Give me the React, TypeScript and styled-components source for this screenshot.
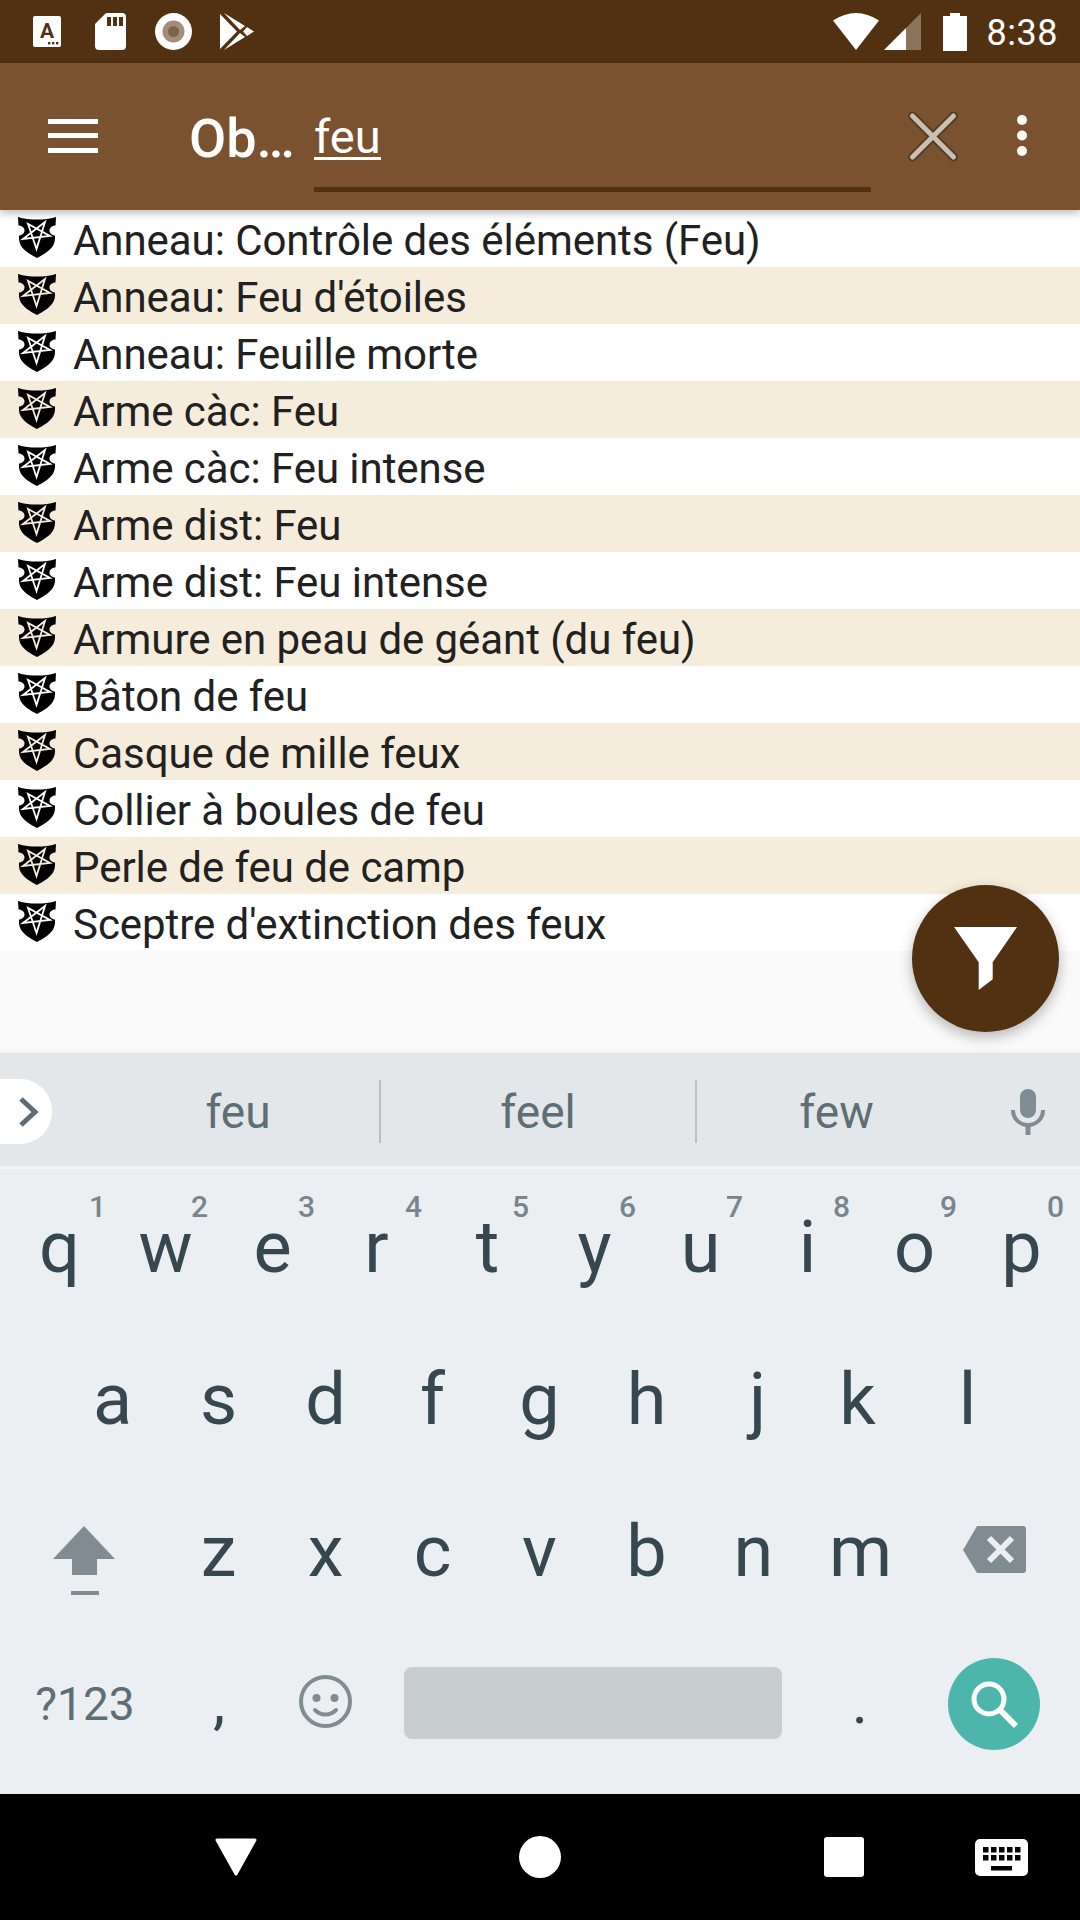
import React from 'react'
import styled, { createGlobalStyle } from 'styled-components'

const GlobalStyle = createGlobalStyle`
  html, body {
    margin: 0;
    padding: 0;
    background: #000;
  }
  * {
    box-sizing: border-box;
  }
`

const Screen = styled.div`
  position: relative;
  width: 1080px;
  height: 1920px;
  display: flex;
  flex-direction: column;
  overflow: hidden;
  font-family: Roboto, "Liberation Sans", sans-serif;
  background: #fafafa;
`

/* status bar */
const StatusBar = styled.div`
  height: 63px;
  flex: none;
  display: flex;
  align-items: flex-start;
  padding-top: 13px;
  padding-right: 22px;
  background: #523112;
  color: #fff;
`

const StatusIcon = styled.svg<{ $gap: number }>`
  flex: none;
  display: block;
  margin-left: ${(p) => p.$gap}px;
`

const Clock = styled.div`
  margin-left: 20px;
  font-size: 36px;
  line-height: 40px;
  letter-spacing: 0.5px;
  color: #fff;
`

const Spacer = styled.div`
  flex: 1;
`

/* toolbar */
const Toolbar = styled.header`
  position: relative;
  z-index: 2;
  height: 147px;
  flex: none;
  display: flex;
  align-items: flex-start;
  background: #7a5230;
  box-shadow: 0 3px 8px rgba(0, 0, 0, 0.28);
`

const ToolIcon = styled.svg<{ $left: number; $top: number }>`
  flex: none;
  display: block;
  margin-left: ${(p) => p.$left}px;
  margin-top: ${(p) => p.$top}px;
`

const Title = styled.div`
  width: 125px;
  margin-left: 91px;
  margin-top: 46px;
  font-size: 54px;
  line-height: 60px;
  font-weight: 500;
  color: #fff;
  white-space: nowrap;
`

const SearchField = styled.div`
  width: 557px;
  flex: none;
  display: flex;
  flex-direction: column;
  align-items: flex-start;
  padding-top: 54px;
`

const Typed = styled.span`
  font-size: 47px;
  line-height: 40px;
  height: 43px;
  color: #fff;
  border-bottom: 3px solid #fff;
`

const FieldLine = styled.div`
  width: 100%;
  height: 5px;
  margin-top: 27px;
  background: #523112;
`

/* result list */
const List = styled.ul`
  margin: 0;
  padding: 0;
  list-style: none;
  height: 741px;
  flex: none;
`

const Row = styled.li<{ $alt: boolean }>`
  height: 57px;
  display: flex;
  align-items: flex-start;
  background: ${(p) => (p.$alt ? '#f6ecdc' : '#fff')};
  color: ${(p) => (p.$alt ? '#f6ecdc' : '#fff')};
`

const RowLabel = styled.span`
  margin-left: 17px;
  padding-top: 2px;
  font-size: 42px;
  line-height: 57px;
  letter-spacing: -0.06px;
  color: #212121;
  white-space: nowrap;
`

const ShieldSvg = styled.svg`
  flex: none;
  display: block;
  margin-left: 18px;
  margin-top: 7px;
`

const Gap = styled.div`
  flex: 1;
  background: #fafafa;
  box-shadow: inset 0 -6px 6px -6px rgba(0, 0, 0, 0.08);
`

const Fab = styled.button`
  position: absolute;
  left: 912px;
  top: 885px;
  width: 147px;
  height: 147px;
  padding: 0;
  border: 0;
  border-radius: 50%;
  background: #523112;
  box-shadow: 0 5px 14px rgba(0, 0, 0, 0.28);
  display: flex;
  align-items: center;
  justify-content: center;
`

/* suggestions */
const SuggestionBar = styled.div`
  height: 116px;
  flex: none;
  display: flex;
  align-items: center;
  padding-top: 4px;
  background: #e3e7ea;
  border-bottom: 3px solid #f1f3f5;
`

const ExpandPill = styled.div`
  width: 52px;
  height: 65px;
  margin-right: 40px;
  flex: none;
  display: flex;
  align-items: center;
  justify-content: flex-end;
  padding-right: 13px;
  background: #fff;
  border-radius: 0 32px 32px 0;
`

const Suggestion = styled.div<{ $width: number; $indent?: number }>`
  width: ${(p) => p.$width}px;
  flex: none;
  padding-top: 1px;
  padding-left: ${(p) => p.$indent ?? 0}px;
  text-align: center;
  font-size: 46px;
  line-height: 56px;
  color: #5f6e75;
`

const SuggestionDivider = styled.div`
  width: 2px;
  height: 63px;
  flex: none;
  background: #b9bfc3;
`

const MicSlot = styled.div`
  flex: 1;
  display: flex;
  justify-content: center;
`

/* keyboard */
const Keyboard = styled.div`
  height: 625px;
  flex: none;
  padding-top: 3px;
  background: #ebeff2;
`

const KeyRow = styled.div<{ $inset: number }>`
  height: 152px;
  display: flex;
  align-items: center;
  padding-left: ${(p) => p.$inset}px;
`

const Key = styled.div<{ $shift?: number }>`
  position: relative;
  width: 107px;
  height: 152px;
  flex: none;
  text-align: center;
  text-indent: ${(p) => (p.$shift ?? 0) * 2}px;
  font-size: 72px;
  line-height: 152px;
  color: #37474f;
`

const Hint = styled.span<{ $shift?: number }>`
  position: absolute;
  left: ${(p) => 79 + (p.$shift ?? 0)}px;
  top: 17px;
  text-indent: 0;
  font-size: 30px;
  line-height: 36px;
  font-weight: 500;
  color: #78858c;
`

const IconKey = styled.div<{ $width: number; $pl?: number; $pt?: number; $pb?: number }>`
  width: ${(p) => p.$width}px;
  flex: none;
  display: flex;
  align-items: center;
  justify-content: center;
  padding: ${(p) => p.$pt ?? 0}px 0 ${(p) => p.$pb ?? 0}px ${(p) => p.$pl ?? 0}px;
`

const ModeKey = styled.div`
  width: 170px;
  margin-right: -2px;
  flex: none;
  text-align: center;
  font-size: 46px;
  line-height: 146px;
  color: #5f6e75;
`

const PunctKey = styled.div<{ $width: number }>`
  width: ${(p) => p.$width}px;
  height: 152px;
  flex: none;
  text-align: center;
  font-size: 62px;
  line-height: 148px;
  color: #37474f;
`

const SpaceBar = styled.div`
  width: 378px;
  height: 72px;
  margin-left: 23px;
  margin-bottom: 2px;
  flex: none;
  border-radius: 8px;
  background: #c8cdd0;
`

const SearchKey = styled.div`
  width: 92px;
  height: 92px;
  margin-left: 10px;
  flex: none;
  display: flex;
  align-items: center;
  justify-content: center;
  border-radius: 50%;
  background: #4db6ac;
`

/* navigation bar */
const NavBar = styled.nav`
  height: 126px;
  flex: none;
  display: flex;
  align-items: flex-start;
  background: #000;
`

const NavIcon = styled.svg<{ $left: number; $top: number }>`
  flex: none;
  display: block;
  margin-left: ${(p) => p.$left}px;
  margin-top: ${(p) => p.$top}px;
`

const results = [
  'Anneau: Contrôle des éléments (Feu)',
  "Anneau: Feu d'étoiles",
  'Anneau: Feuille morte',
  'Arme càc: Feu',
  'Arme càc: Feu intense',
  'Arme dist: Feu',
  'Arme dist: Feu intense',
  'Armure en peau de géant (du feu)',
  'Bâton de feu',
  'Casque de mille feux',
  'Collier à boules de feu',
  'Perle de feu de camp',
  "Sceptre d'extinction des feux",
]

const topRow = [
  ['q', '1'],
  ['w', '2'],
  ['e', '3'],
  ['r', '4'],
  ['t', '5'],
  ['y', '6'],
  ['u', '7'],
  ['i', '8'],
  ['o', '9'],
  ['p', '0'],
]

// a few glyphs sit off the key centre on this keyboard
const letterShift: Record<string, number> = { q: 1, t: 1, y: 1, r: -3, j: 4, k: -3, a: 1 }

const Shield = () => (
  <ShieldSvg width="38" height="41" viewBox="0 0 38 41">
    <path
      fill="#000"
      d="M0 0C6 2 12 2.5 19 2.5S32 2 38 0L37.5 8.5C35 8.5 31.5 10 31.5 13.5S35 18.5 37 18.5C37.5 28 34 33 19 41C4 33 .5 28 1 18.5C3 18.5 6.500 17 6.500 13.5S3 8.500.5 8.500Z"
    />
    <path
      fill="none"
      stroke="currentColor"
      strokeWidth="1.8"
      strokeLinejoin="miter"
      d="M18.500 32L10 7L32 19L5 22L27 5Z"
    />
  </ShieldSvg>
)

const App = () => {
  return (
    <Screen>
      <GlobalStyle />
      <StatusBar>
        <StatusIcon $gap={33} width="28" height="37" viewBox="0 0 28 37">
          <rect x="0" y="3" width="28" height="31" rx="2" fill="#fff" />
          <text x="14" y="25" textAnchor="middle" fontFamily="Roboto" fontWeight="700" fontSize="21" fill="#523112">A</text>
          <rect x="15" y="29" width="2.4" height="2.4" fill="#523112" />
          <rect x="19" y="29" width="2.4" height="2.4" fill="#523112" />
          <rect x="23" y="29" width="2.4" height="2.4" fill="#523112" />
        </StatusIcon>
        <StatusIcon $gap={34} width="31" height="37" viewBox="0 0 31 37">
          <path fill="#fff" d="M11 0H27a4 4 0 0 1 4 4V33a4 4 0 0 1-4 4H4a4 4 0 0 1-4-4V11Z" />
          <path fill="#523112" d="M12 4h4v9h-4zM18 4h4v9h-4zM24 4h4v9h-4z" />
        </StatusIcon>
        <StatusIcon $gap={29} width="37" height="37" viewBox="0 0 37 37">
          <circle cx="18.5" cy="18.5" r="18.5" fill="#fff" />
          <circle cx="18.5" cy="18.5" r="11" fill="#a38e7a" />
          <circle cx="18.5" cy="18.5" r="5.5" fill="#7f6348" />
        </StatusIcon>
        <StatusIcon $gap={28} width="34" height="37" viewBox="0 0 34 37">
          <path fill="#fff" d="M0 1L17 18.5L0 36ZM4 0L25 13L20 17ZM4 37L25 24L20 20ZM27 14L34 18.5L27 23L23 18.5Z" />
        </StatusIcon>
        <Spacer />
        <StatusIcon $gap={0} width="46" height="37" viewBox="0 0 46 37">
          <path fill="#fff" d="M0 7.5Q23 -7.5 46 7.5L23 37Z" />
        </StatusIcon>
        <StatusIcon $gap={5} width="37" height="37" viewBox="0 0 37 37">
          <path fill="#8b735c" d="M22 15L37 0V37H22Z" />
          <path fill="#fff" d="M0 37L22 15V37Z" />
        </StatusIcon>
        <StatusIcon $gap={22} width="24" height="38" viewBox="0 0 24 38">
          <path fill="#fff" d="M7 0H17V3H24V38H0V3H7Z" />
        </StatusIcon>
        <Clock>8:38</Clock>
      </StatusBar>

      <Toolbar>
        <ToolIcon $left={48} $top={56} width="50" height="34" viewBox="0 0 50 34">
          <path fill="#fff" d="M0 0h50v5H0zM0 14h50v5H0zM0 29h50v5H0z" />
        </ToolIcon>
        <Title>Ob…</Title>
        <SearchField>
          <Typed>feu</Typed>
          <FieldLine />
        </SearchField>
        <ToolIcon $left={37} $top={48} width="50" height="51" viewBox="0 0 50 51">
          <path stroke="#4f3a26" strokeWidth="8.5" strokeLinecap="round" d="M4.500 5L45.500 46M45.500 5L4.500 46" />
          <path stroke="#cbbfb2" strokeWidth="5" strokeLinecap="round" d="M4.500 5L45.500 46M45.500 5L4.500 46" />
        </ToolIcon>
        <ToolIcon $left={59} $top={52} width="10" height="41" viewBox="0 0 10 41">
          <circle cx="5" cy="5" r="5" fill="#fff" />
          <circle cx="5" cy="20.5" r="5" fill="#fff" />
          <circle cx="5" cy="36" r="5" fill="#fff" />
        </ToolIcon>
      </Toolbar>

      <List>
        {results.map((label, i) => (
          <Row key={label} $alt={i % 2 === 1}>
            <Shield />
            <RowLabel>{label}</RowLabel>
          </Row>
        ))}
      </List>
      <Gap />
      <Fab>
        <svg width="63" height="63" viewBox="0 0 63 63">
          <path fill="#fff" d="M0 0H63L38.700 35.300V52.300L24.700 63V35.300Z" />
        </svg>
      </Fab>

      <SuggestionBar>
        <ExpandPill>
          <svg width="21" height="30" viewBox="0 0 21 30">
            <path fill="none" stroke="#5f6e75" strokeWidth="5" d="M3 2L17 15L3 28" />
          </svg>
        </ExpandPill>
        <Suggestion $width={287} $indent={5}>feu</Suggestion>
        <SuggestionDivider />
        <Suggestion $width={314}>feel</Suggestion>
        <SuggestionDivider />
        <Suggestion $width={279}>few</Suggestion>
        <MicSlot>
          <svg width="34" height="46" viewBox="0 0 34 46">
            <rect x="9" y="0" width="16" height="29" rx="8" fill="#7f8c93" />
            <path fill="none" stroke="#7f8c93" strokeWidth="4" d="M2 21C2 30 9 36 17 36S32 30 32 21" />
            <rect x="14.500" y="35" width="5" height="11" fill="#7f8c93" />
          </svg>
        </MicSlot>
      </SuggestionBar>

      <Keyboard>
        <KeyRow $inset={5}>
          {topRow.map(([letter, hint]) => (
            <Key key={letter} $shift={letterShift[letter]}>
              {letter}
              <Hint $shift={hint === '1' ? 5 : 0}>{hint}</Hint>
            </Key>
          ))}
        </KeyRow>
        <KeyRow $inset={58}>
          {'asdfghjkl'.split('').map((letter) => (
            <Key key={letter} $shift={letterShift[letter]}>{letter}</Key>
          ))}
        </KeyRow>
        <KeyRow $inset={0}>
          <IconKey $width={165} $pl={3} $pt={16}>
            <svg width="62" height="69" viewBox="0 0 62 69">
              <path fill="#808c92" d="M31 0L62 33H44V49H19V33H0Z" />
              <rect x="18" y="65" width="28" height="4" fill="#808c92" />
            </svg>
          </IconKey>
          {'zxcvbnm'.split('').map((letter) => (
            <Key key={letter}>{letter}</Key>
          ))}
          <IconKey $width={161} $pb={5}>
            <svg width="63" height="47" viewBox="0 0 63 47">
              <path fill="#808c92" d="M14 0H60a3 3 0 0 1 3 3V44a3 3 0 0 1-3 3H14L0 24Z" />
              <path stroke="#ebeff2" strokeWidth="6" d="M26 12L49 35M49 12L26 35" />
            </svg>
          </IconKey>
        </KeyRow>
        <KeyRow $inset={0}>
          <ModeKey>?123</ModeKey>
          <PunctKey $width={102}>,</PunctKey>
          <IconKey $width={111} $pb={5}>
            <svg width="53" height="53" viewBox="0 0 53 53">
              <circle cx="26.5" cy="26.5" r="24.5" fill="none" stroke="#808c92" strokeWidth="4" />
              <circle cx="17.5" cy="23" r="4" fill="#808c92" />
              <circle cx="35.5" cy="23" r="4" fill="#808c92" />
              <path fill="none" stroke="#808c92" strokeWidth="4" strokeLinecap="round" d="M16 35C22 41 31 41 37 35" />
            </svg>
          </IconKey>
          <SpaceBar />
          <PunctKey $width={156}>.</PunctKey>
          <SearchKey>
            <svg width="50" height="50" viewBox="0 0 50 50">
              <circle cx="20" cy="20" r="15" fill="none" stroke="#fff" strokeWidth="5" />
              <path stroke="#fff" strokeWidth="6" d="M31 31L47 47" />
            </svg>
          </SearchKey>
        </KeyRow>
      </Keyboard>

      <NavBar>
        <NavIcon $left={215} $top={44} width="42" height="38" viewBox="0 0 42 38">
          <path fill="#fff" stroke="#fff" strokeWidth="3" strokeLinejoin="round" d="M2 2H40L21 36Z" />
        </NavIcon>
        <NavIcon $left={262} $top={42} width="42" height="42" viewBox="0 0 42 42">
          <circle cx="21" cy="21" r="21" fill="#fff" />
        </NavIcon>
        <NavIcon $left={263} $top={43} width="40" height="40" viewBox="0 0 40 40">
          <rect width="40" height="40" rx="3" fill="#fff" />
        </NavIcon>
        <NavIcon $left={111} $top={45} width="53" height="37" viewBox="0 0 53 37">
          <rect width="53" height="37" rx="5" fill="#fff" />
          <path
            fill="#000"
            d="M8 8h5.500v5.500H8zM16 8h5.500v5.500H16zM24 8h5.500v5.500H24zM32 8h5.500v5.500H32zM40 8h5.500v5.500H40zM8 16h5.500v5.500H8zM16 16h5.500v5.500H16zM24 16h5.500v5.500H24zM32 16h5.500v5.500H32zM40 16h5.500v5.500H40zM16 27h21v4.500H16z"
          />
        </NavIcon>
      </NavBar>
    </Screen>
  )
}

export default App
